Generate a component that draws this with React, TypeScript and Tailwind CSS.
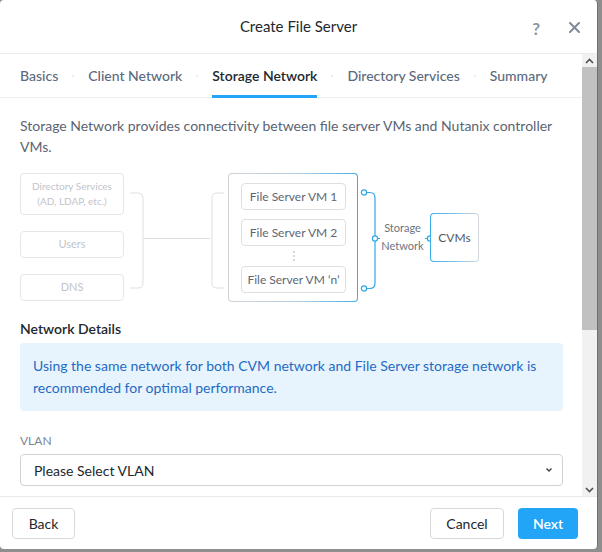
import React from "react";

const tabs = [
  { label: "Basics", active: false },
  { label: "Client Network", active: false },
  { label: "Storage Network", active: true },
  { label: "Directory Services", active: false },
  { label: "Summary", active: false },
];

function LeftConnector() {
  return (
    <svg width="104" height="130" viewBox="0 0 104 130" className="block">
      <path
        d="M6 20 H14 Q19 20 19 25 V110 Q19 115 14 115 H6"
        fill="none"
        stroke="#dcdfe3"
        strokeWidth="1"
      />
      <line x1="19" y1="65.5" x2="86" y2="65.5" stroke="#dcdfe3" strokeWidth="1" />
      <path
        d="M100 20 H93 Q88 20 88 25 V110 Q88 115 93 115 H100"
        fill="none"
        stroke="#dcdfe3"
        strokeWidth="1"
      />
    </svg>
  );
}

function RightConnector() {
  return (
    <div className="relative w-[72px] h-[129px]">
      <svg width="72" height="129" viewBox="0 0 72 129" className="absolute inset-0">
        <path
          d="M8 19.5 H12 Q17 19.5 17 25 V110 Q17 115.5 12 115.5 H8"
          fill="none"
          stroke="#2fa8e8"
          strokeWidth="1.2"
        />
        <line x1="17" y1="65.5" x2="72" y2="65.5" stroke="#2fa8e8" strokeWidth="1.2" />
        <circle cx="6" cy="19.5" r="2.6" fill="#fff" stroke="#2fa8e8" strokeWidth="1.2" />
        <circle cx="6" cy="115.5" r="2.6" fill="#fff" stroke="#2fa8e8" strokeWidth="1.2" />
        <circle cx="17" cy="65.5" r="2.6" fill="#fff" stroke="#2fa8e8" strokeWidth="1.2" />
        <circle cx="72" cy="65.5" r="2.6" fill="#fff" stroke="#2fa8e8" strokeWidth="1.2" />
      </svg>
      <div className="absolute left-[22px] w-[45px] top-[46px] text-center text-[11px] leading-[18px] text-[#6b7480]">
        <div className="bg-white">Storage</div>
        <div className="bg-white">Network</div>
      </div>
    </div>
  );
}

export default function App() {
  return (
    <div
      className="w-[602px] h-[552px] bg-[#8e8e8e] overflow-hidden"
      style={{ fontFamily: "Lato, 'Noto Sans', sans-serif" }}
    >
      <div className="w-[598px] h-[549px] bg-white rounded-[4px] flex flex-col overflow-hidden border-r border-[#6f6f6f]">
        {/* Header */}
        <div className="h-[54px] shrink-0 relative flex items-center justify-center border-b border-[#e9ecef]">
          <div className="text-[15px] text-[#22272e]">Create File Server</div>
          <div className="absolute right-[57px] top-[16px] text-[17px] font-bold text-[#8a96a3]">?</div>
          <svg
            className="absolute right-[17px] top-[22px]"
            width="11"
            height="11"
            viewBox="0 0 11 11"
          >
            <path d="M1 1 L10 10 M10 1 L1 10" stroke="#7f8b98" strokeWidth="2" strokeLinecap="round" />
          </svg>
        </div>

        {/* Body */}
        <div className="flex flex-1 min-h-0">
          <div className="flex-1 min-w-0 overflow-hidden">
            {/* Tabs */}
            <div className="h-[44px] border-b border-[#eceef1] flex items-stretch pl-[20px]">
              {tabs.map((t, i) => (
                <React.Fragment key={t.label}>
                  {i > 0 && (
                    <div className="w-[30px] flex items-center justify-center">
                      <div className="w-[2px] h-[2px] rounded-full bg-[#e3e6ea]" />
                    </div>
                  )}
                  <div
                    className={
                      "relative flex items-center text-[14px] " +
                      (t.active ? "text-[#22272e] font-semibold" : "text-[#5b6b80] font-medium")
                    }
                  >
                    {t.label}
                    {t.active && (
                      <div className="absolute left-0 right-0 bottom-[-1px] h-[3px] bg-[#22a5f7]" />
                    )}
                  </div>
                </React.Fragment>
              ))}
            </div>

            <div className="px-[20px]">
              <p className="mt-[17px] text-[14px] leading-[21px] text-[#5b6472]">
                Storage Network provides connectivity between file server VMs and Nutanix controller VMs.
              </p>

              {/* Diagram */}
              <div className="mt-[16px] flex items-start h-[130px]">
                <div className="w-[104px] flex flex-col gap-[16px]">
                  <div className="h-[42px] border border-[#e4e6ea] rounded-[4px] flex flex-col items-center justify-center text-[10px] leading-[15px] text-[#bfc4ca]">
                    <div>Directory Services</div>
                    <div>(AD, LDAP, etc.)</div>
                  </div>
                  <div className="h-[27px] border border-[#e4e6ea] rounded-[4px] flex items-center justify-center text-[11px] text-[#bfc4ca]">
                    Users
                  </div>
                  <div className="h-[27px] border border-[#e4e6ea] rounded-[4px] flex items-center justify-center text-[11px] text-[#bfc4ca]">
                    DNS
                  </div>
                </div>
                <LeftConnector />
                <div className="w-[130px] h-[129px] rounded-[4px] p-px bg-gradient-to-r from-[#cfd3d8] via-[#b9cfe0] to-[#36aee9]">
                  <div className="w-full h-full bg-white rounded-[3px] pt-[9px] pl-[12px] pr-[11px] flex flex-col">
                    <div className="h-[27px] border border-[#dcdfe3] rounded-[4px] flex items-center justify-center text-[12px] text-[#5c6673]">
                      File Server VM 1
                    </div>
                    <div className="mt-[9px] h-[27px] border border-[#dcdfe3] rounded-[4px] flex items-center justify-center text-[12px] text-[#5c6673]">
                      File Server VM 2
                    </div>
                    <div className="h-[20px] flex flex-col items-center justify-center gap-[2px]">
                      <div className="w-[2px] h-[2px] rounded-full bg-[#c8ccd1]" />
                      <div className="w-[2px] h-[2px] rounded-full bg-[#c8ccd1]" />
                      <div className="w-[2px] h-[2px] rounded-full bg-[#c8ccd1]" />
                    </div>
                    <div className="h-[27px] border border-[#dcdfe3] rounded-[4px] flex items-center justify-center text-[12px] text-[#5c6673] whitespace-nowrap">
                      File Server VM ‘n’
                    </div>
                  </div>
                </div>
                <RightConnector />
                <div className="mt-[40px] w-[49px] h-[49px] rounded-[4px] p-px bg-gradient-to-r from-[#36aee9] via-[#7fc3e8] to-[#d3d7dc]">
                  <div className="w-full h-full bg-white rounded-[3px] flex items-center justify-center text-[12px] text-[#4f5a66]">
                    CVMs
                  </div>
                </div>
              </div>

              <div className="mt-[16px] text-[14px] font-semibold text-[#22272e] leading-[20px]">
                Network Details
              </div>
              <div className="mt-[4px] w-[543px] bg-[#e8f4fd] rounded-[4px] px-[13px] py-[12px] text-[14px] leading-[22px] text-[#1f6bc4]">
                Using the same network for both CVM network and File Server storage network is recommended for optimal performance.
              </div>

              <div className="mt-[22px] text-[12px] text-[#7a8594] leading-[16px]">VLAN</div>
              <div className="mt-[5px] w-[543px] h-[32px] border border-[#cfd3d8] rounded-[4px] flex items-center justify-between pl-[13px] pr-[9px]">
                <span className="text-[14px] text-[#22272e]">Please Select VLAN</span>
                <svg width="8" height="6" viewBox="0 0 8 6">
                  <path d="M1.5 1.5 L4 4 L6.5 1.5" fill="none" stroke="#3a424c" strokeWidth="1.4" />
                </svg>
              </div>
            </div>
          </div>

          {/* Scrollbar */}
          <div className="w-[15px] shrink-0 bg-[#f1f1f1] flex flex-col">
            <div className="h-[13px] flex items-center justify-center">
              <svg width="9" height="6" viewBox="0 0 9 6">
                <path d="M1 5 L4.5 1.5 L8 5" fill="none" stroke="#505050" strokeWidth="1.6" />
              </svg>
            </div>
            <div className="h-[263px] bg-[#c1c1c1]" />
            <div className="flex-1" />
            <div className="h-[13px] flex items-center justify-center">
              <svg width="9" height="6" viewBox="0 0 9 6">
                <path d="M1 1 L4.5 4.5 L8 1" fill="none" stroke="#505050" strokeWidth="1.6" />
              </svg>
            </div>
          </div>
        </div>

        {/* Footer */}
        <div className="h-[53px] shrink-0 border-t border-[#e6e9ed] flex items-center justify-between pl-[12px] pr-[19px]">
          <div className="h-[31px] w-[63px] border border-[#d6dade] rounded-[4px] text-[14px] text-[#22272e] bg-white flex items-center justify-center">
            Back
          </div>
          <div className="flex gap-[14px]">
            <div className="h-[31px] w-[74px] border border-[#d6dade] rounded-[4px] text-[14px] text-[#22272e] bg-white flex items-center justify-center">
              Cancel
            </div>
            <div className="h-[31px] w-[60px] rounded-[4px] text-[14px] font-semibold text-white bg-[#22a5f7] flex items-center justify-center">
              Next
            </div>
          </div>
        </div>
      </div>
    </div>
  );
}
